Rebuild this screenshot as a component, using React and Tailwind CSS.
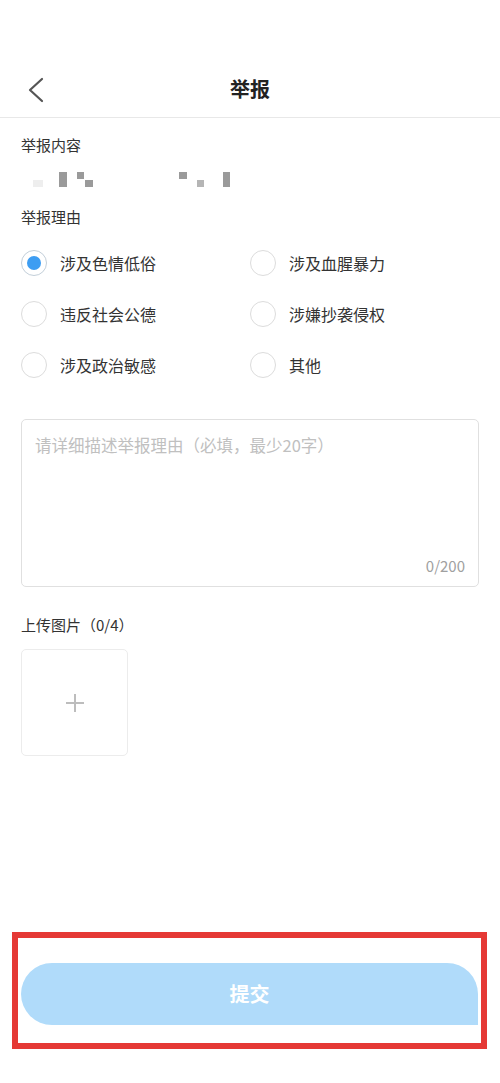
import React from "react";

const reasons = [
  "涉及色情低俗",
  "涉及血腥暴力",
  "违反社会公德",
  "涉嫌抄袭侵权",
  "涉及政治敏感",
  "其他",
];

const font = { fontFamily: '"Noto Sans CJK SC", "Noto Sans", sans-serif' };

function Radio({ label, checked }) {
  return (
    <div className="flex items-center h-[26px] gap-[13px]">
      <span
        className={
          "w-[26px] h-[26px] rounded-full flex items-center justify-center border-[1.5px] " +
          (checked ? "border-[#c3cfd9]" : "border-[#dcdcdc]")
        }
      >
        {checked && <span className="w-[14px] h-[14px] rounded-full bg-[#3d9df2]" />}
      </span>
      <span className="text-[16px] text-[#333] leading-none">{label}</span>
    </div>
  );
}

export default function App() {
  return (
    <div className="w-[500px] h-[1083px] bg-white flex flex-col" style={font}>
      {/* status bar space */}
      <div className="h-[60px]" />

      {/* Header */}
      <div className="relative h-[58px] flex items-center justify-center border-b border-[#e8e8e8]">
        <svg className="absolute left-[27px] top-[17px]" width="18" height="26" viewBox="0 0 18 26" fill="none">
          <path d="M15 2 L3 13 L15 24" stroke="#555" strokeWidth="2.2" strokeLinecap="round" strokeLinejoin="round" />
        </svg>
        <h1 className="text-[20px] font-bold text-[#222] leading-none">举报</h1>
      </div>

      <div className="px-[21px]">
        {/* 举报内容 */}
        <p className="mt-[17px] text-[15px] leading-[20px] text-[#333]">举报内容</p>
        <svg className="mt-[17px] block" width="230" height="16" viewBox="0 0 230 16">
          <rect x="12" y="8" width="10" height="7" fill="#eeeeee" />
          <rect x="38" y="0" width="8" height="15" fill="#9a9a9a" />
          <rect x="56" y="0" width="7" height="7" fill="#9a9a9a" />
          <rect x="64" y="8" width="8" height="7" fill="#9a9a9a" />
          <rect x="158" y="0" width="8" height="7" fill="#9a9a9a" />
          <rect x="176" y="8" width="7" height="7" fill="#b5b5b5" />
          <rect x="202" y="0" width="7" height="15" fill="#9a9a9a" />
        </svg>

        {/* 举报理由 */}
        <p className="mt-[19px] text-[15px] leading-[20px] text-[#333]">举报理由</p>
        <div className="mt-[23px] grid grid-cols-2 gap-y-[25px]">
          {reasons.map((r, i) => (
            <Radio key={r} label={r} checked={i === 0} />
          ))}
        </div>

        {/* description */}
        <div className="mt-[41px] h-[168px] border border-[#e0e0e0] rounded-[5px] flex flex-col justify-between px-[13px] pt-[14px] pb-[10px]">
          <p className="text-[16.5px] leading-[22px] text-[#c0c0c0]">请详细描述举报理由（必填，最少20字）</p>
          <p className="text-[15px] leading-[20px] text-[#a0a0a0] text-right">0/200</p>
        </div>

        {/* upload */}
        <p className="mt-[28px] text-[15px] leading-[20px] text-[#333]">上传图片（0/4）</p>
        <div className="mt-[14px] w-[107px] h-[107px] border border-[#ececec] rounded-[5px] flex items-center justify-center">
          <svg width="20" height="20" viewBox="0 0 20 20">
            <path d="M10 1 V19 M1 10 H19" stroke="#bdbdbd" strokeWidth="2" />
          </svg>
        </div>
      </div>

      {/* submit */}
      <div className="mt-[176px] ml-[12px] w-[475px] border-[6px] border-[#e53935] px-[3px] pt-[25px] pb-[18px]">
        <button className="w-full h-[62px] rounded-l-full rounded-tr-full rounded-br-[4px] bg-[#b0dbfa] text-white text-[20px] font-bold">
          提交
        </button>
      </div>
    </div>
  );
}
